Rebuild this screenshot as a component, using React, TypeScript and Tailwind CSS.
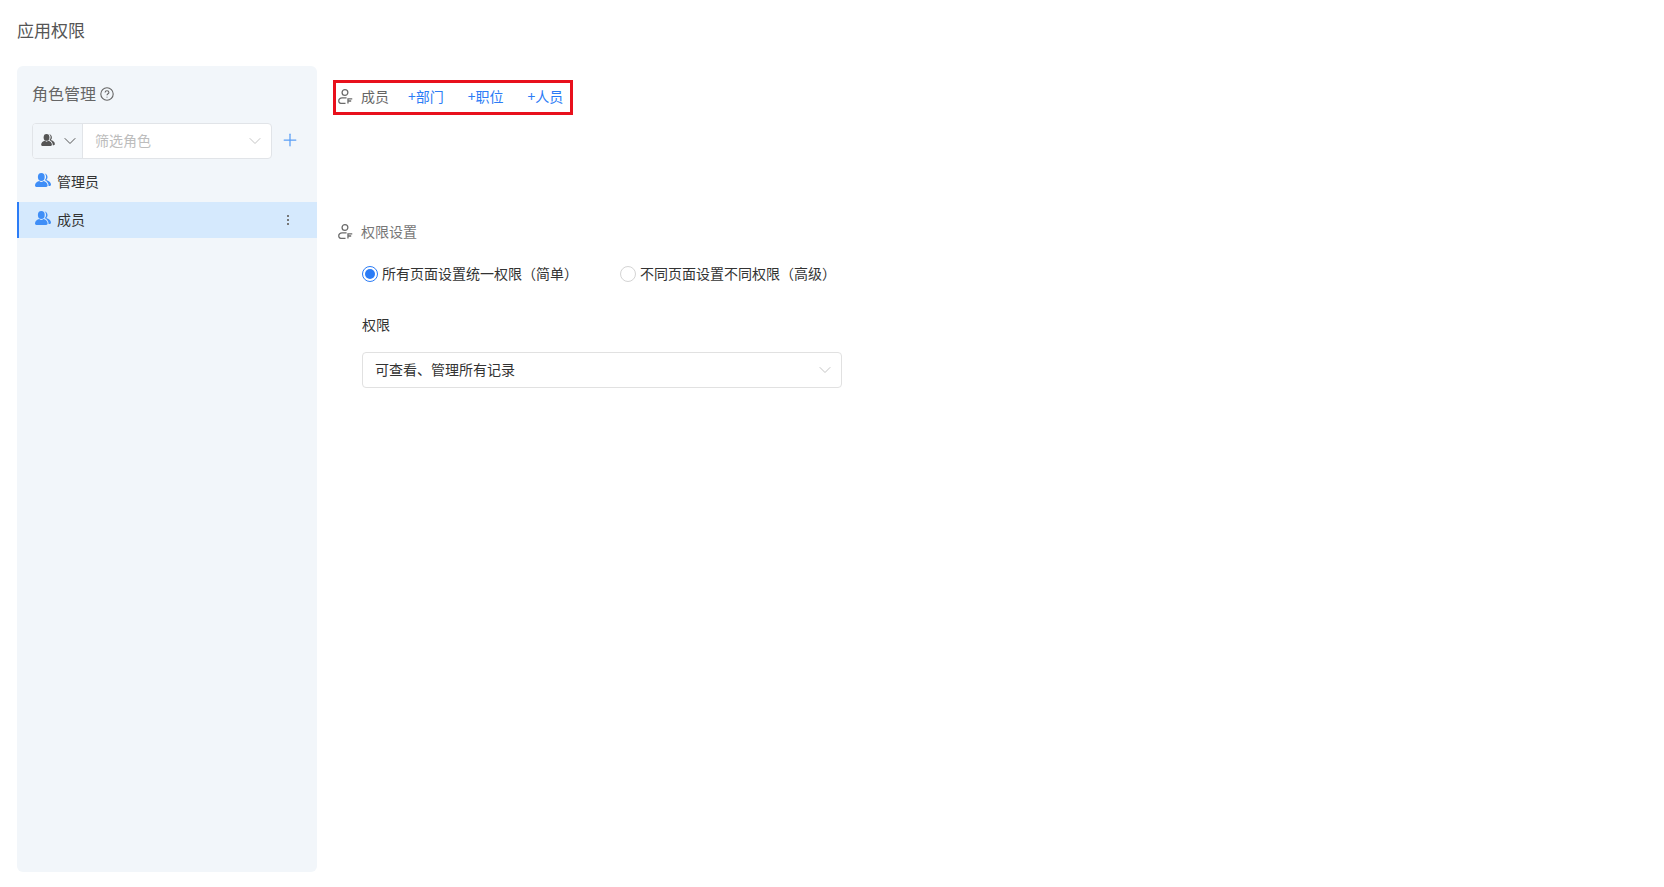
import { ChevronDown, Plus } from 'lucide-react';

const font = { fontFamily: '"Noto Sans CJK SC", "Liberation Sans", sans-serif' };

function UsersIcon({ className }: { className?: string }) {
  return (
    <svg viewBox="0 0 16 14" className={className} fill="currentColor">
      <ellipse cx="6.300" cy="4" rx="3.400" ry="4" />
      <path d="M0 12.600c0-2.600 2.200-4 4.300-4.600.6.600 1.200.9 2 .9s1.500-.3 2.100-.9c2.100.6 4.200 2 4.200 4.600 0 .8-.6 1.400-1.400 1.400H1.400C.6 14 0 13.400 0 12.600z" />
      <path d="M9.300.3c1.800.2 3.200 1.800 3.200 3.800 0 1.200-.5 2.300-1.300 3 2.600.8 4.800 2.200 4.800 4.700 0 .7-.5 1.200-1.200 1.200h-1.200c0-2.800-1.500-4.800-4-6 1-.9 1.500-1.900 1.500-3.100 0-1.700-.7-2.900-1.800-3.600z" />
    </svg>
  );
}

function MemberIcon() {
  return (
    <svg viewBox="0 0 14 14" className="h-[15px] w-[15px] text-[#6b6b6b]" fill="none" stroke="currentColor" strokeWidth="1.200">
      <circle cx="6.500" cy="3.300" r="2.700" />
      <path d="M8 8.300H3.800C2 8.300.7 9.400.7 10.900S2 13.500 3.800 13.500H7" />
      <path d="M9.300 13.500V9.200h4M9.300 11.200h3" />
    </svg>
  );
}

function RoleRow({ name, active }: { name: string; active?: boolean }) {
  return (
    <div
      className={
        active
          ? 'flex h-9 items-center border-l-2 border-[#2b7cf6] bg-[#d5e9fd] pl-4 pr-[28px]'
          : 'flex h-9 items-center border-l-2 border-transparent pl-4 pr-[28px]'
      }
    >
      <UsersIcon className="mb-[5px] h-[14px] w-4 text-[#3f8ef7]" />
      <span className="ml-[6px] pb-[1px] text-[14px] text-[#333]">{name}</span>
      {active && (
        <span className="ml-auto flex flex-col gap-[2px]">
          <span className="h-[2px] w-[2px] bg-[#777]" />
          <span className="h-[2px] w-[2px] bg-[#777]" />
          <span className="h-[2px] w-[2px] bg-[#777]" />
        </span>
      )}
    </div>
  );
}

function Sidebar() {
  return (
    <aside className="h-[806px] w-[300px] shrink-0 rounded-[6px] bg-[#f2f6fa] pt-[17px]">
      <div className="flex h-[20px] items-center pl-[15px] text-[16px] text-[#666]">
        <span>角色管理</span>
        <svg viewBox="0 0 14 14" className="ml-1 mt-[1px] h-[14px] w-[14px] text-[#666]" fill="none" stroke="currentColor" strokeWidth="1.100">
          <circle cx="7" cy="7" r="6.200" />
          <path d="M5.100 5.500c0-1.100.9-1.800 1.900-1.800s1.900.7 1.900 1.700c0 1.400-1.900 1.400-1.900 2.900" />
          <path d="M7 9.700v.9" />
        </svg>
      </div>
      <div className="mt-[20px] flex items-center pl-[15px]">
        <div className="flex h-[36px] w-[240px] overflow-hidden rounded-[4px] border border-[#e1e4e8] bg-white">
          <div className="flex w-[50px] items-center justify-center gap-[5px] border-r border-[#e1e4e8] bg-[#f2f6fa] pl-[6px] text-[#555]">
            <UsersIcon className="mb-[2px] h-[12px] w-[14px]" />
            <ChevronDown className="h-5 w-5" strokeWidth={1.200} />
          </div>
          <div className="flex flex-1 items-center justify-between pl-[12px] pr-[6px] text-[14px] text-[#bdbdbd]">
            <span className="pb-[1px]">筛选角色</span>
            <ChevronDown className="h-5 w-5 text-[#c4c4c4]" strokeWidth={1.200} />
          </div>
        </div>
        <Plus className="mb-[2px] ml-[8px] h-5 w-5 text-[#5a9ef5]" strokeWidth={1.500} />
      </div>
      <div className="mt-[5px] flex flex-col gap-[2px]">
        <RoleRow name="管理员" />
        <RoleRow name="成员" active />
      </div>
    </aside>
  );
}

function Radio({ label, checked }: { label: string; checked?: boolean }) {
  return (
    <div className="flex items-center">
      <span
        className={
          checked
            ? 'flex h-4 w-4 items-center justify-center rounded-full border border-[#2b7cf6] bg-white'
            : 'flex h-4 w-4 items-center justify-center rounded-full border border-[#d4d4d4] bg-white'
        }
      >
        {checked && <span className="h-[10px] w-[10px] rounded-full bg-[#2b7cf6]" />}
      </span>
      <span className="ml-1 pb-[1px] text-[14px] text-[#333]">{label}</span>
    </div>
  );
}

export default function App() {
  return (
    <div className="h-[887px] overflow-hidden bg-white pl-[17px]" style={font}>
      <h1 className="flex h-[66px] items-center pb-[7px] text-[17px] font-normal text-[#555]">应用权限</h1>
      <div className="flex">
        <Sidebar />
        <main className="ml-4 flex-1">
          {/* 成员 */}
          <div className="mt-[14px] flex h-[35px] w-[240px] items-center border-[3px] border-[#e8101c] pb-[2px] pl-[2px] text-[14px]">
            <MemberIcon />
            <span className="ml-[8px] text-[#666]">成员</span>
            <span className="ml-[19px] text-[#2b7cf6]">+部门</span>
            <span className="ml-[24px] text-[#2b7cf6]">+职位</span>
            <span className="ml-[24px] text-[#2b7cf6]">+人员</span>
          </div>

          {/* 权限设置 */}
          <div className="mt-[106px] flex h-[20px] items-center pl-[5px] text-[14px] text-[#777]">
            <MemberIcon />
            <span className="ml-[8px]">权限设置</span>
          </div>
          <div className="ml-[29px] mt-[22px] flex items-center gap-[42px]">
            <Radio label="所有页面设置统一权限（简单）" checked />
            <Radio label="不同页面设置不同权限（高级）" />
          </div>
          <div className="ml-[29px] mt-[29px] text-[14px] leading-[20px] text-[#333]">权限</div>
          <div className="ml-[29px] mt-[18px] flex h-[36px] w-[480px] items-center justify-between rounded-[4px] border border-[#e1e1e1] pl-[12px] pr-[6px] text-[14px] text-[#333]">
            <span className="pb-[1px]">可查看、管理所有记录</span>
            <ChevronDown className="h-5 w-5 text-[#c4c4c4]" strokeWidth={1.200} />
          </div>
        </main>
      </div>
    </div>
  );
}
